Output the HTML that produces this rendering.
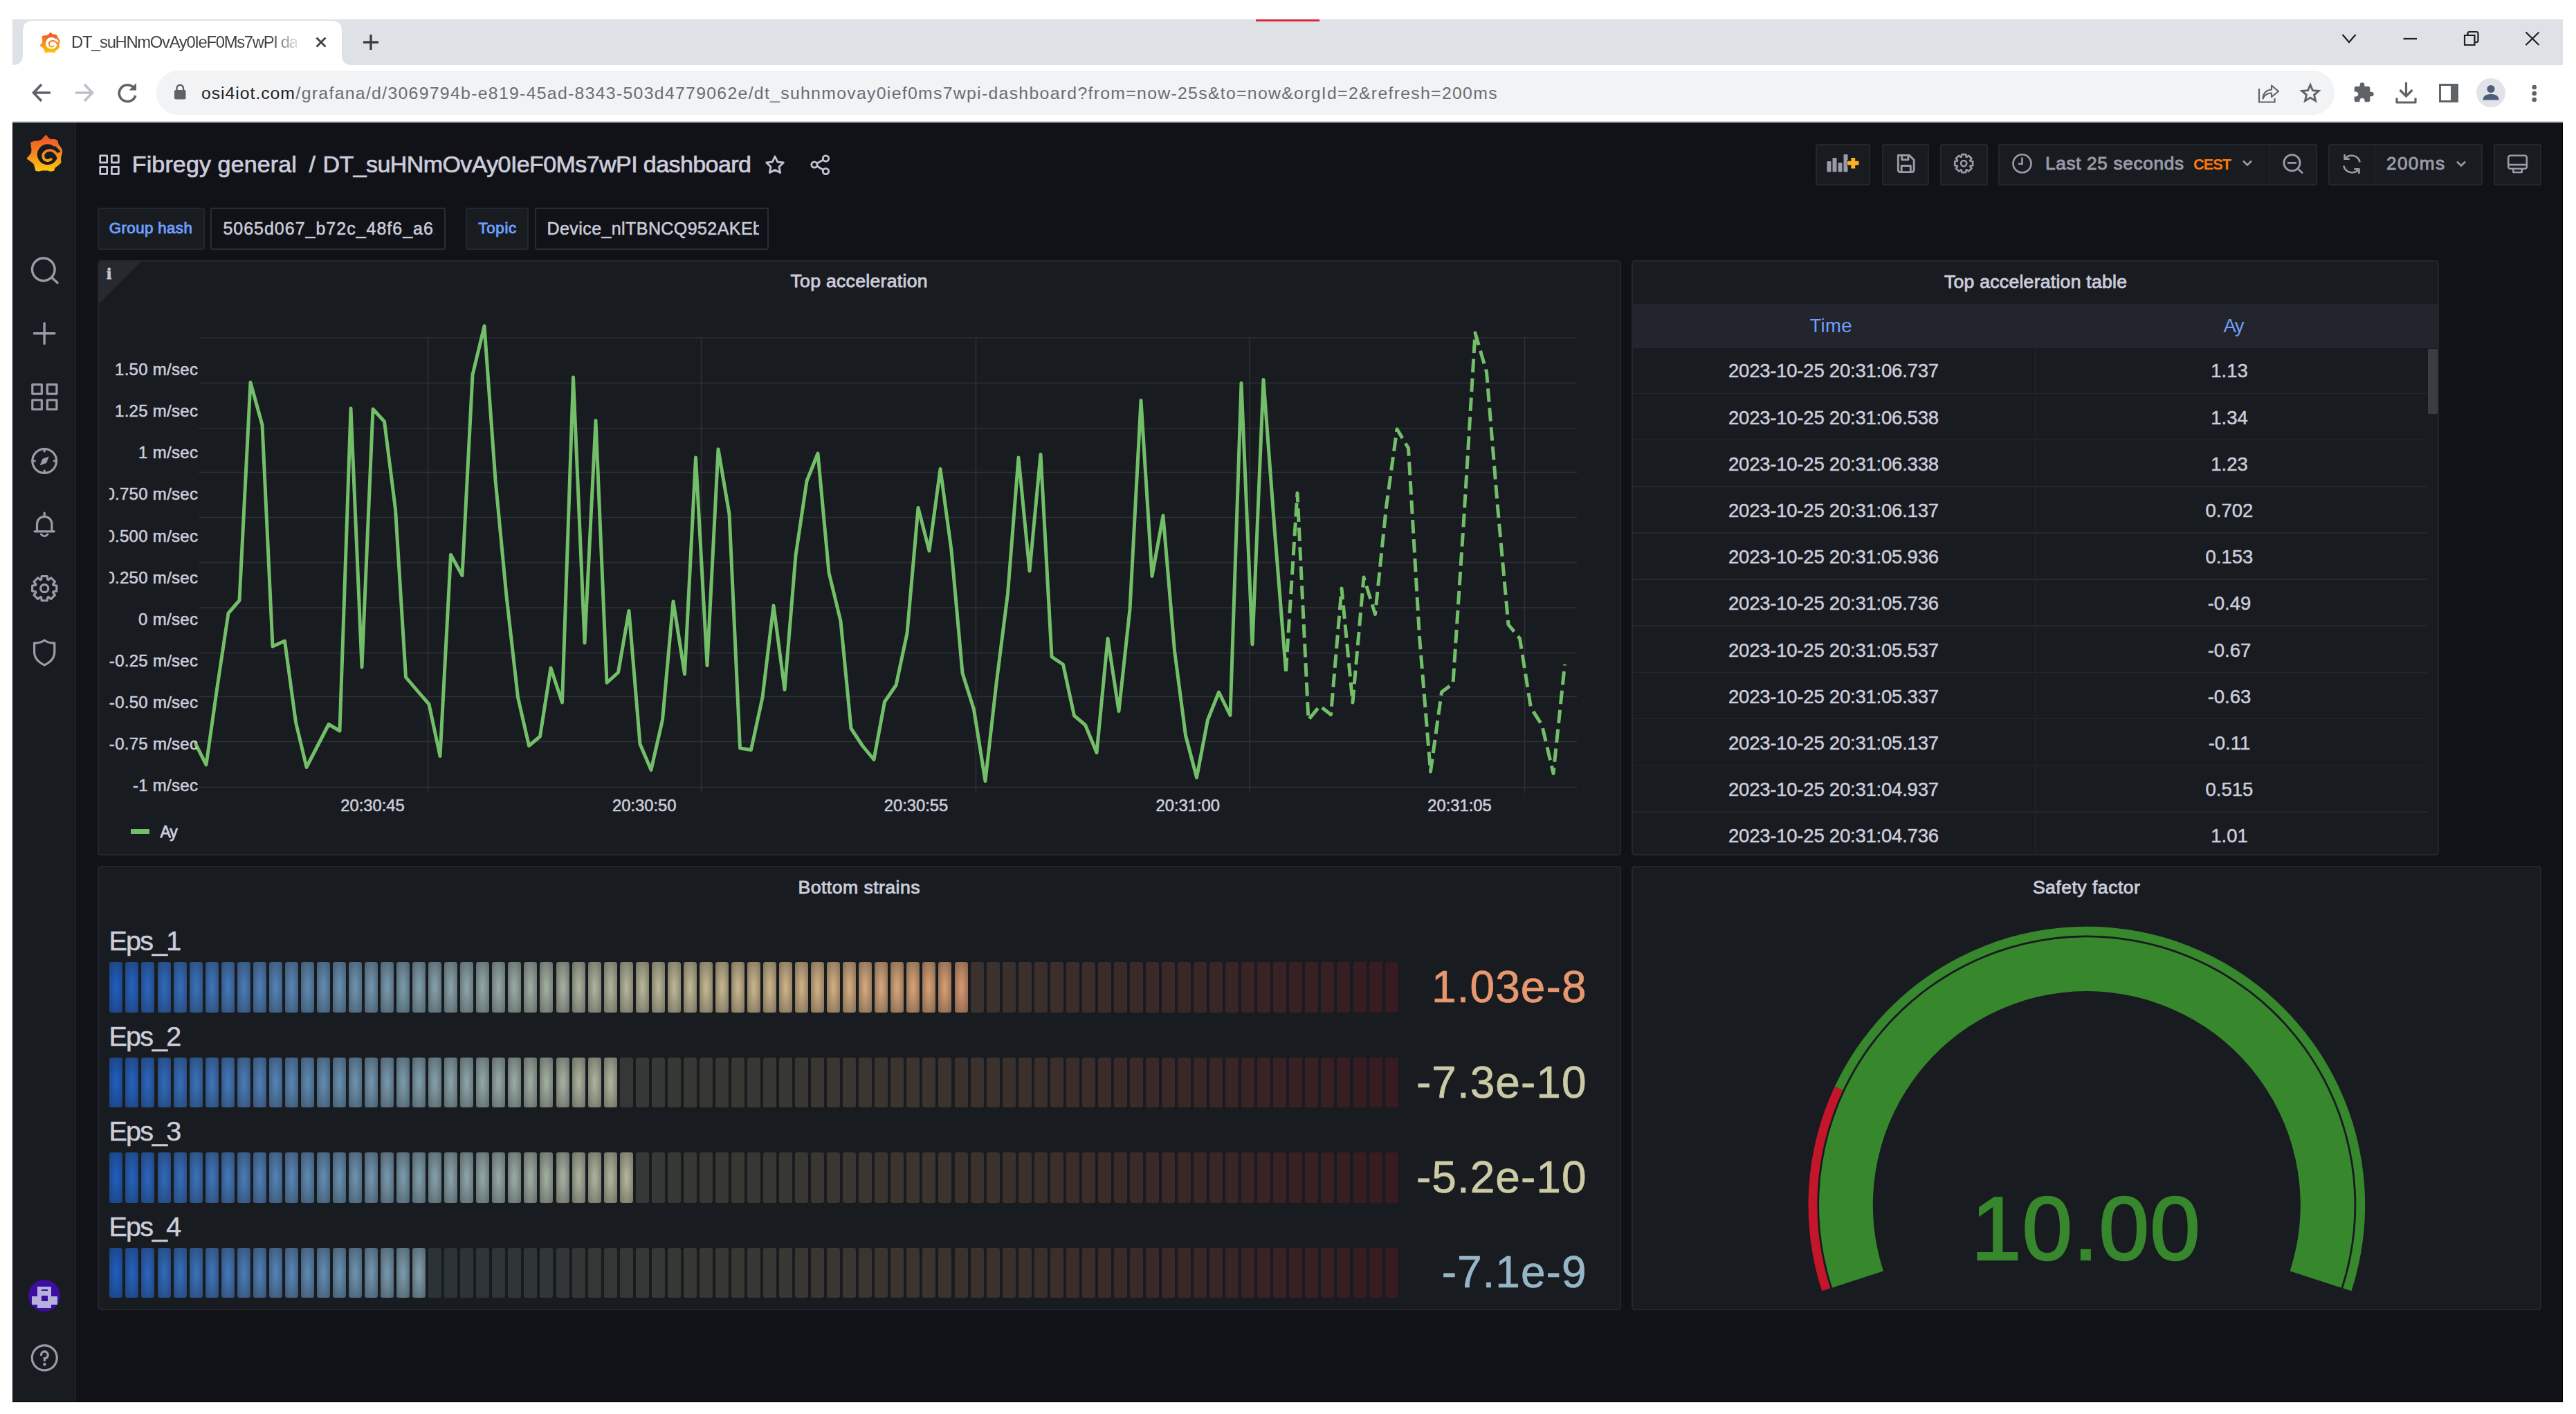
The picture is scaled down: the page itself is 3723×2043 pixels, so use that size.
<!DOCTYPE html>
<html lang="en"><head><meta charset="utf-8"><title>DT_suHNmOvAy0IeF0Ms7wPI dashboard - Grafana</title><style>html,body{margin:0;padding:0}body{width:3723px;height:2043px;position:relative;overflow:hidden;background:#fff;font-family:"Liberation Sans", sans-serif;}.b{position:absolute}.t{position:absolute;white-space:pre;line-height:1}svg{position:absolute;overflow:visible}.lcd i{position:absolute;top:0;width:19px;height:100%;border-radius:3px;display:block}</style></head>
<body>
<div class="b" style="left:18px;top:28px;width:3686px;height:66px;background:#dee1e6;"></div>
<div class="b" style="left:1815px;top:28px;width:92px;height:2.5px;background:#e0283a;"></div>
<svg style="left:0;top:0" width="600" height="100"><path d="M18 94 Q33 94 33 79 L33 45 Q33 30 48 30 L479 30 Q494 30 494 45 L494 79 Q494 94 509 94 Z" fill="#fff"/></svg>
<div class="b" style="left:18px;top:94px;width:3686px;height:82px;background:#fff;"></div>
<svg style="left:49.3px;top:38.8px" width="45.5" height="45.5" viewBox="0 0 80 80"><defs><linearGradient id="lg1" gradientUnits="userSpaceOnUse" x1="0" y1="13" x2="0" y2="66"><stop offset="0.1" stop-color="#f05a28"/><stop offset="0.55" stop-color="#f78d1e"/><stop offset="1" stop-color="#fccb0a"/></linearGradient></defs><path d="M42.43 13.47 L45.26 16.97 L47.24 18.95 L50.92 19.52 L55.16 19.52 L59.12 21.78 L59.97 26.59 L63.08 30.55 L65.06 33.95 L65.74 37.34 L64.21 43.00 L63.37 46.96 L63.93 52.62 L59.97 56.58 L55.16 59.97 L53.47 64.50 L48.66 65.06 L45.26 63.93 L40.74 63.82 L36.21 63.93 L31.68 65.06 L27.72 64.21 L26.87 59.97 L24.89 54.31 L19.80 50.35 L15.16 46.96 L18.67 43.00 L21.78 38.47 L22.07 33.38 L21.22 28.29 L20.93 24.05 L25.46 22.35 L31.68 21.78 L36.78 19.80 L39.60 16.41Z" fill="url(#lg1)" stroke="url(#lg1)" stroke-width="1.2" stroke-linejoin="round"/><circle cx="44.70" cy="41.19" r="14.82" fill="#fff"/><path d="M55.73 28.57 L63.82 37.34 L59.12 39.04 L53.75 33.95Z" fill="#fff"/><path d="M61.67 50.92 C59.97 40.74 54.31 34.96 47.52 35.19 C41.30 35.64 38.02 39.60 38.25 43.56 C38.59 48.09 42.43 50.64 46.11 49.79 C48.09 49.34 49.22 48.77 49.79 48.09" fill="none" stroke="url(#lg1)" stroke-width="3.85" stroke-linecap="round"/></svg>
<span class="t" style="left:103.00px;top:48.67px;font-size:23.8px;color:#3c4043;letter-spacing:-1.304px;padding-bottom:9px;background:linear-gradient(90deg,#3c4043 0,#3c4043 88%,rgba(60,64,67,0.15) 100%);-webkit-background-clip:text;background-clip:text;color:transparent;">DT_suHNmOvAy0IeF0Ms7wPI da</span>
<svg style="left:455px;top:52px" width="18" height="18" viewBox="0 0 18 18"><path d="M2.5 2.5 L15.5 15.5 M15.5 2.5 L2.5 15.5" stroke="#3c4043" stroke-width="2.8" fill="none"/></svg>
<svg style="left:524px;top:49px" width="24" height="24" viewBox="0 0 24 24"><path d="M12 1 V23 M1 12 H23" stroke="#3c4043" stroke-width="3.4" fill="none"/></svg>
<svg style="left:3380px;top:40px" width="300" height="34" viewBox="0 0 300 34" fill="none" stroke="#1f1f1f" stroke-width="2.2"><path d="M5.5 10 L15 21 L24.5 10"/><path d="M93.5 16 H113"/><path d="M182 11 H196.5 V25 H182 Z"/><path d="M186.5 10.5 V8.5 Q186.5 6 189 6 H199 Q201.5 6 201.5 8.5 V18.5 Q201.5 21 199 21 H197"/><path d="M270.5 6.5 L289.5 25 M289.5 6.5 L270.5 25"/></svg>
<svg style="left:40px;top:114px" width="170" height="40" viewBox="0 0 170 40" fill="none" stroke-width="3.6"><path d="M33 20 H9 M20 8 L8.5 20 L20 32" stroke="#5f6368"/><path d="M69 20 H93 M82 8 L93.5 20 L82 32" stroke="#bdc1c6"/><path d="M153 12.5 A12 12 0 1 0 155.8 24" stroke="#5f6368"/><path d="M157 6 V16.5 H146.5 Z" fill="#5f6368" stroke="none"/></svg>
<div class="b" style="left:226px;top:102px;width:3147.5px;height:64px;background:#f1f3f4;border-radius:32px;"></div>
<svg style="left:250px;top:120px" width="22" height="26" viewBox="0 0 22 26"><rect x="2" y="10" width="16.5" height="13.5" rx="2" fill="#5f6368"/><path d="M5.5 11 V7.5 A4.7 4.7 0 0 1 15 7.5 V11" stroke="#5f6368" stroke-width="2.4" fill="none"/></svg>
<span class="t" style="left:291.00px;top:123.22px;font-size:24.8px;color:#202124;letter-spacing:0.958px;">osi4iot.com</span>
<span class="t" style="left:427.50px;top:123.22px;font-size:24.8px;color:#696d72;letter-spacing:1.303px;">/grafana/d/3069794b-e819-45ad-8343-503d4779062e/dt_suhnmovay0ief0ms7wpi-dashboard?from=now-25s&amp;to=now&amp;orgId=2&amp;refresh=200ms</span>
<svg style="left:3262px;top:118px" width="36" height="34" viewBox="0 0 36 34" fill="none" stroke="#5f6368" stroke-width="2.2"><path d="M3 10 V29.5 H25.5 V24"/><path d="M8.5 24.5 C9 16 14 12 21 11.5 V5.5 L31 14 L21 22 V16.5 C15 16.5 11 19 8.5 24.5Z" stroke-linejoin="round"/></svg>
<svg style="left:3323px;top:118px" width="32" height="32" viewBox="0 0 32 32" fill="none" stroke="#5f6368" stroke-width="2.8" stroke-linejoin="miter"><path d="M16 4.5 L19.4 12.6 L28.2 13.3 L21.5 19.1 L23.6 27.7 L16 23.1 L8.4 27.7 L10.5 19.1 L3.8 13.3 L12.6 12.6 Z"/></svg>
<svg style="left:3400px;top:118px" width="32" height="32" viewBox="0 0 24 24"><path fill="#5f6368" d="M20.5 11H19V7c0-1.1-.9-2-2-2h-4V3.5a2.5 2.5 0 0 0-5 0V5H4c-1.1 0-1.99.9-1.99 2v3.8H3.5c1.49 0 2.7 1.21 2.7 2.7s-1.21 2.7-2.7 2.7H2V20c0 1.1.9 2 2 2h3.8v-1.5c0-1.49 1.21-2.7 2.7-2.7 1.49 0 2.7 1.21 2.7 2.7V22H17c1.1 0 2-.9 2-2v-4h1.5a2.5 2.5 0 0 0 0-5z"/></svg>
<svg style="left:3460px;top:116px" width="36" height="36" viewBox="0 0 36 36" fill="none" stroke="#5f6368" stroke-width="3.2"><path d="M17.5 3 V22.5 M8.5 14 L17.5 23 L26.5 14"/><path d="M4 25.5 V32 H31 V25.5" stroke-linejoin="round"/></svg>
<svg style="left:3524px;top:120px" width="30" height="30" viewBox="0 0 30 30"><rect x="2.5" y="2.5" width="25" height="24" fill="none" stroke="#5f6368" stroke-width="3"/><rect x="18" y="2.5" width="9.5" height="24" fill="#5f6368"/></svg>
<div class="b" style="left:3579px;top:112.75px;width:42px;height:42px;background:#e1e3e8;border-radius:21px;"></div>
<svg style="left:3579px;top:112.75px" width="42" height="42" viewBox="0 0 42 42"><circle cx="21" cy="15.5" r="5.6" fill="#4e5d78"/><path d="M9.5 31.5 C9.5 25 15 23 21 23 C27 23 32.5 25 32.5 31.5 Z" fill="#4e5d78"/></svg>
<svg style="left:3656px;top:118px" width="14" height="34" viewBox="0 0 14 34"><circle cx="6.75" cy="8" r="3.3" fill="#5f6368"/><circle cx="6.75" cy="17" r="3.3" fill="#5f6368"/><circle cx="6.75" cy="26" r="3.3" fill="#5f6368"/></svg>
<div class="b" style="left:18px;top:175px;width:3686px;height:1.5px;background:#d4d6d9;"></div>
<div class="b" style="left:18px;top:176.5px;width:3686px;height:1849.5px;background:#111217;"></div>
<div class="b" style="left:18px;top:2025px;width:3686px;height:1px;background:#000;"></div>
<div class="b" style="left:3703.3px;top:176.5px;width:1px;height:1849.5px;background:#000;"></div>
<div class="b" style="left:18px;top:176.5px;width:90.6px;height:1848.5px;background:#181b1f;border-right:1.5px solid #25272d;"></div>
<svg style="left:24px;top:182px" width="80" height="80" viewBox="0 0 80 80"><defs><linearGradient id="lg2" gradientUnits="userSpaceOnUse" x1="0" y1="13" x2="0" y2="66"><stop offset="0.1" stop-color="#f05a28"/><stop offset="0.55" stop-color="#f78d1e"/><stop offset="1" stop-color="#fccb0a"/></linearGradient></defs><path d="M42.43 13.47 L45.26 16.97 L47.24 18.95 L50.92 19.52 L55.16 19.52 L59.12 21.78 L59.97 26.59 L63.08 30.55 L65.06 33.95 L65.74 37.34 L64.21 43.00 L63.37 46.96 L63.93 52.62 L59.97 56.58 L55.16 59.97 L53.47 64.50 L48.66 65.06 L45.26 63.93 L40.74 63.82 L36.21 63.93 L31.68 65.06 L27.72 64.21 L26.87 59.97 L24.89 54.31 L19.80 50.35 L15.16 46.96 L18.67 43.00 L21.78 38.47 L22.07 33.38 L21.22 28.29 L20.93 24.05 L25.46 22.35 L31.68 21.78 L36.78 19.80 L39.60 16.41Z" fill="url(#lg2)" stroke="url(#lg2)" stroke-width="1.2" stroke-linejoin="round"/><circle cx="44.70" cy="41.19" r="14.82" fill="#181b1f"/><path d="M55.73 28.57 L63.82 37.34 L59.12 39.04 L53.75 33.95Z" fill="#181b1f"/><path d="M61.67 50.92 C59.97 40.74 54.31 34.96 47.52 35.19 C41.30 35.64 38.02 39.60 38.25 43.56 C38.59 48.09 42.43 50.64 46.11 49.79 C48.09 49.34 49.22 48.77 49.79 48.09" fill="none" stroke="url(#lg2)" stroke-width="3.85" stroke-linecap="round"/></svg>
<svg style="left:40px;top:366px" width="50" height="50" viewBox="0 0 50 50" fill="none" stroke="#9a9ba8" stroke-width="3.4" stroke-linecap="round"><circle cx="22.8" cy="23.3" r="16.3"/><path d="M34.8 35 L43 42.5"/></svg>
<svg style="left:40px;top:458px" width="50" height="50" viewBox="0 0 50 50" fill="none" stroke="#9a9ba8" stroke-width="3.4" stroke-linecap="round"><path d="M24.1 9 V38.5 M9.3 23.7 H38.9"/></svg>
<svg style="left:40px;top:550px" width="50" height="50" viewBox="0 0 50 50" fill="none" stroke="#9a9ba8" stroke-width="3.2" stroke-linejoin="round"><rect x="6.8" y="5.6" width="13.5" height="13.5"/><rect x="28.4" y="5.6" width="13.5" height="13.5"/><rect x="6.8" y="28" width="13.5" height="13.5"/><rect x="28.4" y="28" width="13.5" height="13.5"/></svg>
<svg style="left:40px;top:642px" width="50" height="50" viewBox="0 0 50 50" fill="none" stroke="#9a9ba8" stroke-width="3.2" stroke-linecap="round"><circle cx="24.2" cy="24" r="17.4"/><path d="M24.2 6.6 V10 M24.2 38 V41.4 M6.8 24 H10.2 M38.2 24 H41.6"/><path d="M30.8 17.4 L27 27 L17.6 30.6 L21.4 21 Z" fill="#9a9ba8" stroke="none"/></svg>
<svg style="left:40px;top:734px" width="50" height="50" viewBox="0 0 50 50" fill="none" stroke="#9a9ba8" stroke-width="3.2" stroke-linecap="round" stroke-linejoin="round"><path d="M24.2 7 V10"/><path d="M13.5 33.5 V23 A10.7 10.7 0 0 1 34.9 23 V33.5 M10 33.8 H38.4"/><path d="M19.5 38 Q24.2 43.5 28.9 38"/></svg>
<svg style="left:41px;top:827px" width="48" height="48" viewBox="0 0 50 50" fill="none" stroke="#9a9ba8" stroke-width="3.3" stroke-linejoin="round"><path d="M19.39 10.74 L20.01 5.77 L28.39 5.77 L29.01 10.74 L30.25 11.25 L34.20 8.18 L40.12 14.10 L37.05 18.05 L37.56 19.29 L42.53 19.91 L42.53 28.29 L37.56 28.91 L37.05 30.15 L40.12 34.10 L34.20 40.02 L30.25 36.95 L29.01 37.46 L28.39 42.43 L20.01 42.43 L19.39 37.46 L18.15 36.95 L14.20 40.02 L8.28 34.10 L11.35 30.15 L10.84 28.91 L5.87 28.29 L5.87 19.91 L10.84 19.29 L11.35 18.05 L8.28 14.10 L14.20 8.18 L18.15 11.25Z"/><circle cx="24.2" cy="24.1" r="5.8"/></svg>
<svg style="left:40px;top:918px" width="50" height="50" viewBox="0 0 50 50" fill="none" stroke="#9a9ba8" stroke-width="3.2" stroke-linejoin="round"><path d="M24.2 7 C19 10.5 14 11.5 9.6 11 V24 C9.6 33 16 39 24.2 43 C32.4 39 38.8 33 38.8 24 V11 C34.4 11.5 29.4 10.5 24.2 7 Z"/></svg>
<div class="b" style="left:41.3px;top:1849px;width:46px;height:46px;background:#3b0ea0;border-radius:23px;"></div>
<div class="b" style="left:54.377134372680025px;top:1858.9012620638455px;width:19.747587230883443px;height:15.293244246473645px;background:#b6b0dc;"></div>
<div class="b" style="left:46.210838901262065px;top:1873.4521158129176px;width:36.822568671121005px;height:11.878247958426131px;background:#b6b0dc;"></div>
<div class="b" style="left:54.377134372680025px;top:1885.033407572383px;width:19.747587230883443px;height:4.7512991833704525px;background:#b6b0dc;"></div>
<div class="b" style="left:60.31625835189309px;top:1863.0586488492947px;width:8.908685968819599px;height:2.3756495916852263px;background:#3b0ea0;"></div>
<div class="b" style="left:60.31625835189309px;top:1871.9673348181143px;width:8.908685968819599px;height:8.314773570898293px;background:#3b0ea0;"></div>
<svg style="left:40px;top:1937px" width="50" height="50" viewBox="0 0 50 50" fill="none" stroke="#9a9ba8" stroke-width="3.2" stroke-linecap="round"><circle cx="24.3" cy="24.8" r="18"/><path d="M19.5 20.5 A4.9 4.9 0 1 1 24.4 25.6 V28.5" stroke-width="3.4"/><circle cx="24.4" cy="34.2" r="2.2" fill="#9a9ba8" stroke="none"/></svg>
<svg style="left:140px;top:220px" width="36" height="36" viewBox="0 0 36 36" fill="none" stroke="#ccccdc" stroke-width="2.6" stroke-linejoin="round"><rect x="4.7" y="4.9" width="10" height="10"/><rect x="21.4" y="4.9" width="10" height="10"/><rect x="4.7" y="21.4" width="10" height="10"/><rect x="21.4" y="21.4" width="10" height="10"/></svg>
<span class="t" style="left:190.80px;top:220.30px;font-size:34px;color:#ccccdc;letter-spacing:0.125px;-webkit-text-stroke:0.7px #ccccdc;">Fibregy general</span>
<span class="t" style="left:446.50px;top:220.30px;font-size:34px;color:#ccccdc;-webkit-text-stroke:0.7px #ccccdc;">/</span>
<span class="t" style="left:466.50px;top:220.30px;font-size:34px;color:#ccccdc;letter-spacing:-0.584px;-webkit-text-stroke:0.7px #ccccdc;">DT_suHNmOvAy0IeF0Ms7wPI dashboard</span>
<svg style="left:1104px;top:222px" width="32" height="32" viewBox="0 0 32 32" fill="none" stroke="#c4c5d2" stroke-width="2.8" stroke-linejoin="round"><path d="M16 4 L19.7 11.9 L28.3 13 L22 19 L23.6 27.6 L16 23.4 L8.4 27.6 L10 19 L3.7 13 L12.3 11.9 Z"/></svg>
<svg style="left:1169px;top:221px" width="34" height="34" viewBox="0 0 34 34" fill="none" stroke="#c4c5d2" stroke-width="2.8"><circle cx="24.5" cy="8" r="4.2"/><circle cx="8" cy="17" r="4.2"/><circle cx="24.5" cy="26.5" r="4.2"/><path d="M11.7 15 L20.8 10 M11.7 19 L20.8 24.5"/></svg>
<div class="b" style="left:2623.75px;top:207.6px;width:79.5px;height:60.4px;background:#181b1f;border:2px solid #23262c;box-sizing:border-box;border-radius:3px;"></div>
<div class="b" style="left:2719.5px;top:207.6px;width:68.5px;height:60.4px;background:#181b1f;border:2px solid #23262c;box-sizing:border-box;border-radius:3px;"></div>
<div class="b" style="left:2804.25px;top:207.6px;width:68.25px;height:60.4px;background:#181b1f;border:2px solid #23262c;box-sizing:border-box;border-radius:3px;"></div>
<div class="b" style="left:2888.25px;top:207.6px;width:460.25px;height:60.4px;background:#181b1f;border:2px solid #23262c;box-sizing:border-box;border-radius:3px;"></div>
<div class="b" style="left:3279.5px;top:208px;width:1.5px;height:59.5px;background:#25272d;"></div>
<div class="b" style="left:3364.6px;top:207.6px;width:223.4000000000001px;height:60.4px;background:#181b1f;border:2px solid #23262c;box-sizing:border-box;border-radius:3px;"></div>
<div class="b" style="left:3431.5px;top:208px;width:1.5px;height:59.5px;background:#25272d;"></div>
<div class="b" style="left:3604px;top:207.6px;width:69px;height:60.4px;background:#181b1f;border:2px solid #23262c;box-sizing:border-box;border-radius:3px;"></div>
<svg style="left:2638px;top:214px" width="56" height="44" viewBox="0 0 56 44"><rect x="2.5" y="19" width="6" height="15.5" rx="1" fill="#9a9ba8"/><rect x="10.5" y="14" width="6" height="20.5" rx="1" fill="#9a9ba8"/><rect x="18.5" y="21" width="6" height="13.5" rx="1" fill="#9a9ba8"/><rect x="26.5" y="9" width="6" height="25.5" rx="1" fill="#9a9ba8"/><path d="M40.3 13 V30 M31.5 21.7 H49" stroke="#181b1f" stroke-width="9.5"/><path d="M40.3 14 V29.5 M32 21.7 H48.5" stroke="#ffb023" stroke-width="5.8"/></svg>
<svg style="left:2736.5px;top:219px" width="35" height="35" viewBox="0 0 36 36" fill="none" stroke="#9a9ba8" stroke-width="3" stroke-linejoin="round"><path d="M6.5 5.5 H23 L30 12.5 V27 Q30 30.5 26.5 30.5 H10 Q6.5 30.5 6.5 27 Z"/><path d="M12 5.5 V12 H21.5 V5.5"/><path d="M11.5 30 V21 H25 V30"/></svg>
<svg style="left:2820.8px;top:218.8px" width="35.5" height="35.5" viewBox="0 0 50 50" fill="none" stroke="#9a9ba8" stroke-width="3.7" stroke-linejoin="round"><path d="M19.39 10.74 L20.01 5.77 L28.39 5.77 L29.01 10.74 L30.25 11.25 L34.20 8.18 L40.12 14.10 L37.05 18.05 L37.56 19.29 L42.53 19.91 L42.53 28.29 L37.56 28.91 L37.05 30.15 L40.12 34.10 L34.20 40.02 L30.25 36.95 L29.01 37.46 L28.39 42.43 L20.01 42.43 L19.39 37.46 L18.15 36.95 L14.20 40.02 L8.28 34.10 L11.35 30.15 L10.84 28.91 L5.87 28.29 L5.87 19.91 L10.84 19.29 L11.35 18.05 L8.28 14.10 L14.20 8.18 L18.15 11.25Z"/><circle cx="24.2" cy="24.1" r="5.8"/></svg>
<svg style="left:2906px;top:220px" width="34" height="34" viewBox="0 0 34 34" fill="none" stroke="#9a9ba8" stroke-width="2.6" stroke-linecap="round"><circle cx="16.5" cy="16.3" r="13"/><path d="M16.5 8.5 V16.8 H12"/></svg>
<span class="t" style="left:2956.00px;top:222.93px;font-size:26.2px;color:#9a9ba8;letter-spacing:0.663px;-webkit-text-stroke:0.9px #9a9ba8;">Last 25 seconds</span>
<span class="t" style="left:3170.00px;top:227.07px;font-size:21.8px;color:#ff780a;letter-spacing:-1.047px;font-weight:700;">CEST</span>
<svg style="left:3238px;top:228px" width="20" height="16" viewBox="0 0 20 16" fill="none" stroke="#9a9ba8" stroke-width="2.6"><path d="M4 4.5 L10 10.5 L16 4.5"/></svg>
<svg style="left:3296.3px;top:218.6px" width="38" height="38" viewBox="0 0 38 38" fill="none" stroke="#9a9ba8" stroke-width="2.8" stroke-linecap="round"><circle cx="16.5" cy="16.3" r="11.6"/><path d="M25 24.8 L31.2 30.6 M11 16.3 H22"/></svg>
<svg style="left:3381px;top:219.5px" width="36" height="34" preserveAspectRatio="none" viewBox="0 0 38 38" fill="none" stroke="#9a9ba8" stroke-width="2.8" stroke-linecap="round" stroke-linejoin="round"><path d="M31 15 A12.6 12.6 0 0 0 8.5 10.5 M8 4.5 V11 H14.5"/><path d="M7 23 A12.6 12.6 0 0 0 29.5 27.5 M30 33.5 V27 H23.5"/></svg>
<span class="t" style="left:3449.00px;top:222.93px;font-size:26.2px;color:#9a9ba8;letter-spacing:1.348px;-webkit-text-stroke:0.9px #9a9ba8;">200ms</span>
<svg style="left:3546.5px;top:228.5px" width="20" height="16" viewBox="0 0 20 16" fill="none" stroke="#9a9ba8" stroke-width="2.6"><path d="M4 4.5 L10 10.5 L16 4.5"/></svg>
<svg style="left:3620px;top:219.5px" width="38" height="38" viewBox="0 0 40 40" fill="none" stroke="#9a9ba8" stroke-width="2.8" stroke-linejoin="round"><rect x="5.5" y="5" width="28" height="20" rx="3"/><path d="M5.5 19 H33.5"/><path d="M13 25 V30.5 H26 V25"/></svg>
<div class="b" style="left:141.3px;top:299.7px;width:154.8px;height:61px;background:#181b1f;border:2px solid #23262c;box-sizing:border-box;border-radius:3px;"></div>
<span class="t" style="left:157.80px;top:319.05px;font-size:22.3px;color:#6e9fff;letter-spacing:0.387px;-webkit-text-stroke:0.9px #6e9fff;">Group hash</span>
<div class="b" style="left:304px;top:299.7px;width:339.75px;height:61px;background:#111217;border:2px solid #292c33;box-sizing:border-box;border-radius:3px;"></div>
<div class="b" style="left:322.4px;top:317.55px;width:306.1px;height:32.5px;overflow:hidden"><span class="t" style="left:0.00px;top:0;font-size:25px;color:#ccccdc;letter-spacing:0.992px;-webkit-text-stroke:0.5px #ccccdc;">5065d067_b72c_48f6_a62</span></div>
<div class="b" style="left:673px;top:299.7px;width:91.25px;height:61px;background:#181b1f;border:2px solid #23262c;box-sizing:border-box;border-radius:3px;"></div>
<span class="t" style="left:691.25px;top:319.05px;font-size:22.3px;color:#6e9fff;letter-spacing:0.734px;-webkit-text-stroke:0.9px #6e9fff;">Topic</span>
<div class="b" style="left:773px;top:299.7px;width:338.25px;height:61px;background:#111217;border:2px solid #292c33;box-sizing:border-box;border-radius:3px;"></div>
<div class="b" style="left:790.5px;top:317.55px;width:306.0px;height:32.5px;overflow:hidden"><span class="t" style="left:0.00px;top:0;font-size:25px;color:#ccccdc;letter-spacing:0.424px;-webkit-text-stroke:0.5px #ccccdc;">Device_nlTBNCQ952AKEb</span></div>
<div class="b" style="left:141.0px;top:376.2px;width:2202.4px;height:860.2px;background:#181b1f;border:2px solid #23262c;box-sizing:border-box;border-radius:4.5px;"></div>
<svg style="left:142.8px;top:378px" width="62" height="62"><path d="M0 4 Q0 0 4 0 L61 0 L0 61 Z" fill="#262930"/></svg>
<span class="t" style="left:154.20px;top:382.60px;font-size:24px;color:#c6c7d2;font-weight:700;-webkit-text-stroke:1.0px #c6c7d2;font-family:Liberation Serif,serif;">i</span>
<span class="t" style="left:1142.50px;top:393.09px;font-size:26.6px;color:#ccccdc;letter-spacing:0.289px;-webkit-text-stroke:0.85px #ccccdc;">Top acceleration</span>
<svg style="left:0;top:0" width="3723" height="1240"><g stroke="#2d3035" stroke-width="1.5"><path d="M287.5 488 H2279"/><path d="M287.5 553.5 H2279"/><path d="M287.5 619 H2279"/><path d="M287.5 682.5 H2279"/><path d="M287.5 747.5 H2279"/><path d="M287.5 812.5 H2279"/><path d="M287.5 878 H2279"/><path d="M287.5 943.5 H2279"/><path d="M287.5 1006.5 H2279"/><path d="M287.5 1071.5 H2279"/><path d="M287.5 1137.5 H2279"/><path d="M618.5 488 V1146"/><path d="M1013.5 488 V1146"/><path d="M1410.5 488 V1146"/><path d="M1806 488 V1146"/><path d="M2203.5 488 V1146"/></g><defs><clipPath id="pc"><rect x="280.5" y="460" width="1999" height="690"/></clipPath></defs><g clip-path="url(#pc)" fill="none" stroke="#73bf69" stroke-width="5" stroke-linejoin="round" stroke-linecap="butt"><polyline points="281.0,1071.5 298.0,1105.0 314.0,992.5 330.0,886.0 346.0,867.5 362.0,552.5 379.0,614.0 394.0,934.0 411.5,926.0 427.5,1043.5 443.0,1108.5 459.0,1077.5 475.0,1046.5 491.0,1056.0 507.0,590.0 523.0,964.0 539.0,591.0 555.5,609.0 571.5,736.0 586.5,978.5 604.0,999.0 620.0,1017.5 636.0,1092.5 651.5,801.5 668.0,831.5 683.0,541.5 700.0,471.0 716.0,693.5 732.0,861.5 748.5,1007.5 764.5,1077.5 780.5,1064.0 796.0,965.0 812.5,1015.0 828.5,545.0 845.0,929.0 861.0,607.5 877.0,986.5 893.5,971.5 909.0,882.5 925.0,1075.0 941.0,1112.5 957.5,1040.0 973.0,869.0 989.5,974.0 1005.5,661.0 1022.0,961.5 1038.0,649.0 1054.0,742.5 1069.5,1081.0 1085.5,1083.5 1102.0,1007.5 1118.0,875.0 1134.0,996.5 1150.0,802.5 1166.0,695.0 1182.0,655.0 1198.0,827.5 1215.0,897.5 1230.0,1052.5 1246.5,1077.5 1263.0,1097.5 1278.5,1014.0 1295.0,990.0 1311.0,915.0 1327.0,733.5 1343.0,796.0 1359.0,677.5 1375.0,795.0 1391.0,972.5 1407.5,1025.0 1424.0,1128.5 1440.0,987.5 1456.5,857.5 1472.0,661.0 1488.0,825.0 1504.0,656.5 1520.0,949.0 1536.5,960.0 1552.5,1034.0 1568.5,1047.5 1585.0,1087.5 1601.0,922.5 1617.0,1027.5 1633.0,880.0 1649.0,578.5 1665.0,832.5 1681.0,745.0 1697.5,940.0 1713.5,1062.5 1729.5,1123.5 1745.5,1040.0 1761.5,1000.0 1778.0,1033.5 1794.0,553.5 1810.0,931.0 1826.0,548.5 1842.5,770.0 1858.5,970.0"/><polyline points="1858.5,970.0 1875.0,712.5 1891.0,1040.0 1907.5,1020.0 1923.5,1032.5 1939.0,850.0 1955.0,1015.0 1971.0,834.0 1987.5,887.5 2003.5,732.5 2019.0,620.0 2035.5,647.5 2051.5,920.0 2067.5,1115.0 2083.5,1000.0 2100.0,987.5 2116.0,745.0 2132.0,481.0 2148.5,537.5 2164.5,732.5 2180.0,902.5 2196.5,922.5 2212.5,1022.5 2228.5,1047.5 2245.0,1117.5 2261.5,960.0" stroke-dasharray="19.5 8.5"/></g></svg>
<div class="b" style="left:158px;top:521.90px;width:128px;height:31.2px;overflow:hidden"><span class="t" style="left:8.03px;top:0;font-size:24px;color:#ccccdc;letter-spacing:0.287px;-webkit-text-stroke:0.55px #ccccdc;">1.50 m/sec</span></div>
<div class="b" style="left:158px;top:582.05px;width:128px;height:31.2px;overflow:hidden"><span class="t" style="left:8.03px;top:0;font-size:24px;color:#ccccdc;letter-spacing:0.287px;-webkit-text-stroke:0.55px #ccccdc;">1.25 m/sec</span></div>
<div class="b" style="left:158px;top:642.20px;width:128px;height:31.2px;overflow:hidden"><span class="t" style="left:42.12px;top:0;font-size:24px;color:#ccccdc;letter-spacing:0.308px;-webkit-text-stroke:0.55px #ccccdc;">1 m/sec</span></div>
<div class="b" style="left:158px;top:702.35px;width:128px;height:31.2px;overflow:hidden"><span class="t" style="left:-5.61px;top:0;font-size:24px;color:#ccccdc;letter-spacing:0.288px;-webkit-text-stroke:0.55px #ccccdc;">0.750 m/sec</span></div>
<div class="b" style="left:158px;top:762.50px;width:128px;height:31.2px;overflow:hidden"><span class="t" style="left:-5.61px;top:0;font-size:24px;color:#ccccdc;letter-spacing:0.288px;-webkit-text-stroke:0.55px #ccccdc;">0.500 m/sec</span></div>
<div class="b" style="left:158px;top:822.65px;width:128px;height:31.2px;overflow:hidden"><span class="t" style="left:-5.61px;top:0;font-size:24px;color:#ccccdc;letter-spacing:0.288px;-webkit-text-stroke:0.55px #ccccdc;">0.250 m/sec</span></div>
<div class="b" style="left:158px;top:882.80px;width:128px;height:31.2px;overflow:hidden"><span class="t" style="left:42.12px;top:0;font-size:24px;color:#ccccdc;letter-spacing:0.308px;-webkit-text-stroke:0.55px #ccccdc;">0 m/sec</span></div>
<div class="b" style="left:158px;top:942.95px;width:128px;height:31.2px;overflow:hidden"><span class="t" style="left:-0.15px;top:0;font-size:24px;color:#ccccdc;letter-spacing:0.276px;-webkit-text-stroke:0.55px #ccccdc;">-0.25 m/sec</span></div>
<div class="b" style="left:158px;top:1003.10px;width:128px;height:31.2px;overflow:hidden"><span class="t" style="left:-0.15px;top:0;font-size:24px;color:#ccccdc;letter-spacing:0.276px;-webkit-text-stroke:0.55px #ccccdc;">-0.50 m/sec</span></div>
<div class="b" style="left:158px;top:1063.25px;width:128px;height:31.2px;overflow:hidden"><span class="t" style="left:-0.15px;top:0;font-size:24px;color:#ccccdc;letter-spacing:0.276px;-webkit-text-stroke:0.55px #ccccdc;">-0.75 m/sec</span></div>
<div class="b" style="left:158px;top:1123.40px;width:128px;height:31.2px;overflow:hidden"><span class="t" style="left:33.96px;top:0;font-size:24px;color:#ccccdc;letter-spacing:0.289px;-webkit-text-stroke:0.55px #ccccdc;">-1 m/sec</span></div>
<span class="t" style="left:492.18px;top:1152.37px;font-size:23.8px;color:#ccccdc;-webkit-text-stroke:0.55px #ccccdc;">20:30:45</span>
<span class="t" style="left:884.93px;top:1152.37px;font-size:23.8px;color:#ccccdc;-webkit-text-stroke:0.55px #ccccdc;">20:30:50</span>
<span class="t" style="left:1277.68px;top:1152.37px;font-size:23.8px;color:#ccccdc;-webkit-text-stroke:0.55px #ccccdc;">20:30:55</span>
<span class="t" style="left:1670.43px;top:1152.37px;font-size:23.8px;color:#ccccdc;-webkit-text-stroke:0.55px #ccccdc;">20:31:00</span>
<span class="t" style="left:2063.18px;top:1152.37px;font-size:23.8px;color:#ccccdc;-webkit-text-stroke:0.55px #ccccdc;">20:31:05</span>
<div class="b" style="left:189px;top:1197.8px;width:27px;height:7.5px;background:#73bf69;border-radius:0.5px;"></div>
<span class="t" style="left:231.50px;top:1191.15px;font-size:23px;color:#ccccdc;letter-spacing:-1.058px;-webkit-text-stroke:0.8px #ccccdc;">Ay</span>
<div class="b" style="left:2357.8px;top:376.2px;width:1167.5px;height:860.2px;background:#181b1f;border:2px solid #23262c;box-sizing:border-box;border-radius:4.5px;"></div>
<span class="t" style="left:2810.00px;top:393.59px;font-size:26.6px;color:#ccccdc;letter-spacing:0.251px;-webkit-text-stroke:0.85px #ccccdc;">Top acceleration table</span>
<div class="b" style="left:2359.8px;top:439px;width:1163.5px;height:63.5px;background:#22252b;"></div>
<span class="t" style="left:2615.50px;top:456.62px;font-size:27.5px;color:#6e9fff;letter-spacing:0.302px;">Time</span>
<span class="t" style="left:3213.50px;top:456.62px;font-size:27.5px;color:#6e9fff;letter-spacing:-1.609px;">Ay</span>
<div class="b" style="left:2940.7px;top:439px;width:1.5px;height:795.4000000000001px;background:#25272d;"></div>
<div class="b" style="left:2359.8px;top:567.7px;width:1148.1999999999998px;height:1.5px;background:#25272d;"></div>
<span class="t" style="left:2498.00px;top:522.42px;font-size:27.5px;color:#ccccdc;letter-spacing:-0.222px;-webkit-text-stroke:0.5px #ccccdc;">2023-10-25 20:31:06.737</span>
<span class="t" style="left:3195.23px;top:522.42px;font-size:27.5px;color:#ccccdc;-webkit-text-stroke:0.5px #ccccdc;">1.13</span>
<div class="b" style="left:2359.8px;top:634.85px;width:1148.1999999999998px;height:1.5px;background:#25272d;"></div>
<span class="t" style="left:2498.00px;top:589.62px;font-size:27.5px;color:#ccccdc;letter-spacing:-0.222px;-webkit-text-stroke:0.5px #ccccdc;">2023-10-25 20:31:06.538</span>
<span class="t" style="left:3195.23px;top:589.62px;font-size:27.5px;color:#ccccdc;-webkit-text-stroke:0.5px #ccccdc;">1.34</span>
<div class="b" style="left:2359.8px;top:702.0px;width:1148.1999999999998px;height:1.5px;background:#25272d;"></div>
<span class="t" style="left:2498.00px;top:656.82px;font-size:27.5px;color:#ccccdc;letter-spacing:-0.222px;-webkit-text-stroke:0.5px #ccccdc;">2023-10-25 20:31:06.338</span>
<span class="t" style="left:3195.23px;top:656.82px;font-size:27.5px;color:#ccccdc;-webkit-text-stroke:0.5px #ccccdc;">1.23</span>
<div class="b" style="left:2359.8px;top:769.1500000000001px;width:1148.1999999999998px;height:1.5px;background:#25272d;"></div>
<span class="t" style="left:2498.00px;top:724.02px;font-size:27.5px;color:#ccccdc;letter-spacing:-0.222px;-webkit-text-stroke:0.5px #ccccdc;">2023-10-25 20:31:06.137</span>
<span class="t" style="left:3187.59px;top:724.02px;font-size:27.5px;color:#ccccdc;-webkit-text-stroke:0.5px #ccccdc;">0.702</span>
<div class="b" style="left:2359.8px;top:836.3000000000001px;width:1148.1999999999998px;height:1.5px;background:#25272d;"></div>
<span class="t" style="left:2498.00px;top:791.22px;font-size:27.5px;color:#ccccdc;letter-spacing:-0.222px;-webkit-text-stroke:0.5px #ccccdc;">2023-10-25 20:31:05.936</span>
<span class="t" style="left:3187.59px;top:791.22px;font-size:27.5px;color:#ccccdc;-webkit-text-stroke:0.5px #ccccdc;">0.153</span>
<div class="b" style="left:2359.8px;top:903.45px;width:1148.1999999999998px;height:1.5px;background:#25272d;"></div>
<span class="t" style="left:2498.00px;top:858.42px;font-size:27.5px;color:#ccccdc;letter-spacing:-0.222px;-webkit-text-stroke:0.5px #ccccdc;">2023-10-25 20:31:05.736</span>
<span class="t" style="left:3190.66px;top:858.42px;font-size:27.5px;color:#ccccdc;-webkit-text-stroke:0.5px #ccccdc;">-0.49</span>
<div class="b" style="left:2359.8px;top:970.6000000000001px;width:1148.1999999999998px;height:1.5px;background:#25272d;"></div>
<span class="t" style="left:2498.00px;top:925.62px;font-size:27.5px;color:#ccccdc;letter-spacing:-0.222px;-webkit-text-stroke:0.5px #ccccdc;">2023-10-25 20:31:05.537</span>
<span class="t" style="left:3190.66px;top:925.62px;font-size:27.5px;color:#ccccdc;-webkit-text-stroke:0.5px #ccccdc;">-0.67</span>
<div class="b" style="left:2359.8px;top:1037.75px;width:1148.1999999999998px;height:1.5px;background:#25272d;"></div>
<span class="t" style="left:2498.00px;top:992.83px;font-size:27.5px;color:#ccccdc;letter-spacing:-0.222px;-webkit-text-stroke:0.5px #ccccdc;">2023-10-25 20:31:05.337</span>
<span class="t" style="left:3190.66px;top:992.83px;font-size:27.5px;color:#ccccdc;-webkit-text-stroke:0.5px #ccccdc;">-0.63</span>
<div class="b" style="left:2359.8px;top:1104.9px;width:1148.1999999999998px;height:1.5px;background:#25272d;"></div>
<span class="t" style="left:2498.00px;top:1060.03px;font-size:27.5px;color:#ccccdc;letter-spacing:-0.222px;-webkit-text-stroke:0.5px #ccccdc;">2023-10-25 20:31:05.137</span>
<span class="t" style="left:3191.68px;top:1060.03px;font-size:27.5px;color:#ccccdc;-webkit-text-stroke:0.5px #ccccdc;">-0.11</span>
<div class="b" style="left:2359.8px;top:1172.0500000000002px;width:1148.1999999999998px;height:1.5px;background:#25272d;"></div>
<span class="t" style="left:2498.00px;top:1127.22px;font-size:27.5px;color:#ccccdc;letter-spacing:-0.222px;-webkit-text-stroke:0.5px #ccccdc;">2023-10-25 20:31:04.937</span>
<span class="t" style="left:3187.59px;top:1127.22px;font-size:27.5px;color:#ccccdc;-webkit-text-stroke:0.5px #ccccdc;">0.515</span>
<span class="t" style="left:2498.00px;top:1194.42px;font-size:27.5px;color:#ccccdc;letter-spacing:-0.222px;-webkit-text-stroke:0.5px #ccccdc;">2023-10-25 20:31:04.736</span>
<span class="t" style="left:3195.23px;top:1194.42px;font-size:27.5px;color:#ccccdc;-webkit-text-stroke:0.5px #ccccdc;">1.01</span>
<div class="b" style="left:3508.5px;top:503.5px;width:14.5px;height:94.5px;background:#3b3d45;border-radius:2px;"></div>
<div class="b" style="left:141.0px;top:1251.3px;width:2202.4px;height:641.8px;background:#181b1f;border:2px solid #23262c;box-sizing:border-box;border-radius:4.5px;"></div>
<span class="t" style="left:1153.50px;top:1268.59px;font-size:26.6px;color:#ccccdc;letter-spacing:0.464px;-webkit-text-stroke:0.85px #ccccdc;">Bottom strains</span>
<span class="t" style="left:157.60px;top:1340.42px;font-size:39.5px;color:#ccccdc;letter-spacing:-1.848px;-webkit-text-stroke:0.5px #ccccdc;">Eps_1</span>
<div class="b lcd" style="left:158.4px;top:1390.0px;width:1870px;height:72.5px"><i style="left:0.00px;background:radial-gradient(rgba(31,96,196,0.95) 10%,rgba(31,96,196,0.55))"></i><i style="left:23.04px;background:radial-gradient(rgba(37,100,195,0.95) 10%,rgba(37,100,195,0.55))"></i><i style="left:46.08px;background:radial-gradient(rgba(42,103,194,0.95) 10%,rgba(42,103,194,0.55))"></i><i style="left:69.12px;background:radial-gradient(rgba(48,107,193,0.95) 10%,rgba(48,107,193,0.55))"></i><i style="left:92.16px;background:radial-gradient(rgba(53,111,192,0.95) 10%,rgba(53,111,192,0.55))"></i><i style="left:115.20px;background:radial-gradient(rgba(59,115,191,0.95) 10%,rgba(59,115,191,0.55))"></i><i style="left:138.24px;background:radial-gradient(rgba(64,118,190,0.95) 10%,rgba(64,118,190,0.55))"></i><i style="left:161.28px;background:radial-gradient(rgba(69,122,189,0.95) 10%,rgba(69,122,189,0.55))"></i><i style="left:184.32px;background:radial-gradient(rgba(75,126,187,0.95) 10%,rgba(75,126,187,0.55))"></i><i style="left:207.36px;background:radial-gradient(rgba(80,129,186,0.95) 10%,rgba(80,129,186,0.55))"></i><i style="left:230.40px;background:radial-gradient(rgba(86,133,185,0.95) 10%,rgba(86,133,185,0.55))"></i><i style="left:253.44px;background:radial-gradient(rgba(91,136,184,0.95) 10%,rgba(91,136,184,0.55))"></i><i style="left:276.48px;background:radial-gradient(rgba(96,139,183,0.95) 10%,rgba(96,139,183,0.55))"></i><i style="left:299.52px;background:radial-gradient(rgba(101,143,182,0.95) 10%,rgba(101,143,182,0.55))"></i><i style="left:322.56px;background:radial-gradient(rgba(106,146,181,0.95) 10%,rgba(106,146,181,0.55))"></i><i style="left:345.60px;background:radial-gradient(rgba(112,149,179,0.95) 10%,rgba(112,149,179,0.55))"></i><i style="left:368.64px;background:radial-gradient(rgba(117,152,178,0.95) 10%,rgba(117,152,178,0.55))"></i><i style="left:391.68px;background:radial-gradient(rgba(122,155,177,0.95) 10%,rgba(122,155,177,0.55))"></i><i style="left:414.72px;background:radial-gradient(rgba(126,158,176,0.95) 10%,rgba(126,158,176,0.55))"></i><i style="left:437.76px;background:radial-gradient(rgba(131,161,175,0.95) 10%,rgba(131,161,175,0.55))"></i><i style="left:460.80px;background:radial-gradient(rgba(136,163,173,0.95) 10%,rgba(136,163,173,0.55))"></i><i style="left:483.84px;background:radial-gradient(rgba(141,166,172,0.95) 10%,rgba(141,166,172,0.55))"></i><i style="left:506.88px;background:radial-gradient(rgba(145,168,171,0.95) 10%,rgba(145,168,171,0.55))"></i><i style="left:529.92px;background:radial-gradient(rgba(150,171,170,0.95) 10%,rgba(150,171,170,0.55))"></i><i style="left:552.96px;background:radial-gradient(rgba(154,173,168,0.95) 10%,rgba(154,173,168,0.55))"></i><i style="left:576.00px;background:radial-gradient(rgba(158,175,167,0.95) 10%,rgba(158,175,167,0.55))"></i><i style="left:599.04px;background:radial-gradient(rgba(162,177,165,0.95) 10%,rgba(162,177,165,0.55))"></i><i style="left:622.08px;background:radial-gradient(rgba(166,179,164,0.95) 10%,rgba(166,179,164,0.55))"></i><i style="left:645.12px;background:radial-gradient(rgba(170,180,163,0.95) 10%,rgba(170,180,163,0.55))"></i><i style="left:668.16px;background:radial-gradient(rgba(174,182,161,0.95) 10%,rgba(174,182,161,0.55))"></i><i style="left:691.20px;background:radial-gradient(rgba(178,183,160,0.95) 10%,rgba(178,183,160,0.55))"></i><i style="left:714.24px;background:radial-gradient(rgba(181,184,158,0.95) 10%,rgba(181,184,158,0.55))"></i><i style="left:737.28px;background:radial-gradient(rgba(185,185,156,0.95) 10%,rgba(185,185,156,0.55))"></i><i style="left:760.32px;background:radial-gradient(rgba(188,186,155,0.95) 10%,rgba(188,186,155,0.55))"></i><i style="left:783.36px;background:radial-gradient(rgba(191,186,153,0.95) 10%,rgba(191,186,153,0.55))"></i><i style="left:806.40px;background:radial-gradient(rgba(194,187,152,0.95) 10%,rgba(194,187,152,0.55))"></i><i style="left:829.44px;background:radial-gradient(rgba(197,187,150,0.95) 10%,rgba(197,187,150,0.55))"></i><i style="left:852.48px;background:radial-gradient(rgba(200,187,148,0.95) 10%,rgba(200,187,148,0.55))"></i><i style="left:875.52px;background:radial-gradient(rgba(202,187,146,0.95) 10%,rgba(202,187,146,0.55))"></i><i style="left:898.56px;background:radial-gradient(rgba(205,186,144,0.95) 10%,rgba(205,186,144,0.55))"></i><i style="left:921.60px;background:radial-gradient(rgba(207,185,143,0.95) 10%,rgba(207,185,143,0.55))"></i><i style="left:944.64px;background:radial-gradient(rgba(209,185,141,0.95) 10%,rgba(209,185,141,0.55))"></i><i style="left:967.68px;background:radial-gradient(rgba(211,183,139,0.95) 10%,rgba(211,183,139,0.55))"></i><i style="left:990.72px;background:radial-gradient(rgba(212,182,137,0.95) 10%,rgba(212,182,137,0.55))"></i><i style="left:1013.76px;background:radial-gradient(rgba(214,180,135,0.95) 10%,rgba(214,180,135,0.55))"></i><i style="left:1036.80px;background:radial-gradient(rgba(215,179,133,0.95) 10%,rgba(215,179,133,0.55))"></i><i style="left:1059.84px;background:radial-gradient(rgba(217,177,131,0.95) 10%,rgba(217,177,131,0.55))"></i><i style="left:1082.88px;background:radial-gradient(rgba(218,174,128,0.95) 10%,rgba(218,174,128,0.55))"></i><i style="left:1105.92px;background:radial-gradient(rgba(219,172,126,0.95) 10%,rgba(219,172,126,0.55))"></i><i style="left:1128.96px;background:radial-gradient(rgba(219,169,124,0.95) 10%,rgba(219,169,124,0.55))"></i><i style="left:1152.00px;background:radial-gradient(rgba(220,167,122,0.95) 10%,rgba(220,167,122,0.55))"></i><i style="left:1175.04px;background:radial-gradient(rgba(221,164,120,0.95) 10%,rgba(221,164,120,0.55))"></i><i style="left:1198.08px;background:radial-gradient(rgba(221,161,117,0.95) 10%,rgba(221,161,117,0.55))"></i><i style="left:1221.12px;background:radial-gradient(rgba(221,157,115,0.95) 10%,rgba(221,157,115,0.55))"></i><i style="left:1244.16px;background:rgba(221,154,113,0.18)"></i><i style="left:1267.20px;background:rgba(221,150,110,0.18)"></i><i style="left:1290.24px;background:rgba(221,147,108,0.18)"></i><i style="left:1313.28px;background:rgba(221,143,105,0.18)"></i><i style="left:1336.32px;background:rgba(221,139,103,0.18)"></i><i style="left:1359.36px;background:rgba(220,135,100,0.18)"></i><i style="left:1382.40px;background:rgba(220,130,98,0.18)"></i><i style="left:1405.44px;background:rgba(219,126,95,0.18)"></i><i style="left:1428.48px;background:rgba(219,122,93,0.18)"></i><i style="left:1451.52px;background:rgba(218,117,90,0.18)"></i><i style="left:1474.56px;background:rgba(217,112,88,0.18)"></i><i style="left:1497.60px;background:rgba(216,107,85,0.18)"></i><i style="left:1520.64px;background:rgba(215,103,83,0.18)"></i><i style="left:1543.68px;background:rgba(214,98,80,0.18)"></i><i style="left:1566.72px;background:rgba(213,92,77,0.18)"></i><i style="left:1589.76px;background:rgba(212,87,75,0.18)"></i><i style="left:1612.80px;background:rgba(211,82,72,0.18)"></i><i style="left:1635.84px;background:rgba(210,77,69,0.18)"></i><i style="left:1658.88px;background:rgba(209,72,67,0.18)"></i><i style="left:1681.92px;background:rgba(207,66,64,0.18)"></i><i style="left:1704.96px;background:rgba(206,61,61,0.18)"></i><i style="left:1728.00px;background:rgba(205,55,58,0.18)"></i><i style="left:1751.04px;background:rgba(203,50,56,0.18)"></i><i style="left:1774.08px;background:rgba(202,44,53,0.18)"></i><i style="left:1797.12px;background:rgba(200,39,50,0.18)"></i><i style="left:1820.16px;background:rgba(199,33,47,0.18)"></i><i style="left:1843.20px;background:rgba(197,28,45,0.18)"></i></div>
<span class="t" style="left:2068.93px;top:1394.20px;font-size:64px;color:#e89870;letter-spacing:1.085px;-webkit-text-stroke:0.7px #e89870;">1.03e-8</span>
<span class="t" style="left:157.60px;top:1477.92px;font-size:39.5px;color:#ccccdc;letter-spacing:-1.848px;-webkit-text-stroke:0.5px #ccccdc;">Eps_2</span>
<div class="b lcd" style="left:158.4px;top:1527.5px;width:1870px;height:72.5px"><i style="left:0.00px;background:radial-gradient(rgba(31,96,196,0.95) 10%,rgba(31,96,196,0.55))"></i><i style="left:23.04px;background:radial-gradient(rgba(37,100,195,0.95) 10%,rgba(37,100,195,0.55))"></i><i style="left:46.08px;background:radial-gradient(rgba(42,103,194,0.95) 10%,rgba(42,103,194,0.55))"></i><i style="left:69.12px;background:radial-gradient(rgba(48,107,193,0.95) 10%,rgba(48,107,193,0.55))"></i><i style="left:92.16px;background:radial-gradient(rgba(53,111,192,0.95) 10%,rgba(53,111,192,0.55))"></i><i style="left:115.20px;background:radial-gradient(rgba(59,115,191,0.95) 10%,rgba(59,115,191,0.55))"></i><i style="left:138.24px;background:radial-gradient(rgba(64,118,190,0.95) 10%,rgba(64,118,190,0.55))"></i><i style="left:161.28px;background:radial-gradient(rgba(69,122,189,0.95) 10%,rgba(69,122,189,0.55))"></i><i style="left:184.32px;background:radial-gradient(rgba(75,126,187,0.95) 10%,rgba(75,126,187,0.55))"></i><i style="left:207.36px;background:radial-gradient(rgba(80,129,186,0.95) 10%,rgba(80,129,186,0.55))"></i><i style="left:230.40px;background:radial-gradient(rgba(86,133,185,0.95) 10%,rgba(86,133,185,0.55))"></i><i style="left:253.44px;background:radial-gradient(rgba(91,136,184,0.95) 10%,rgba(91,136,184,0.55))"></i><i style="left:276.48px;background:radial-gradient(rgba(96,139,183,0.95) 10%,rgba(96,139,183,0.55))"></i><i style="left:299.52px;background:radial-gradient(rgba(101,143,182,0.95) 10%,rgba(101,143,182,0.55))"></i><i style="left:322.56px;background:radial-gradient(rgba(106,146,181,0.95) 10%,rgba(106,146,181,0.55))"></i><i style="left:345.60px;background:radial-gradient(rgba(112,149,179,0.95) 10%,rgba(112,149,179,0.55))"></i><i style="left:368.64px;background:radial-gradient(rgba(117,152,178,0.95) 10%,rgba(117,152,178,0.55))"></i><i style="left:391.68px;background:radial-gradient(rgba(122,155,177,0.95) 10%,rgba(122,155,177,0.55))"></i><i style="left:414.72px;background:radial-gradient(rgba(126,158,176,0.95) 10%,rgba(126,158,176,0.55))"></i><i style="left:437.76px;background:radial-gradient(rgba(131,161,175,0.95) 10%,rgba(131,161,175,0.55))"></i><i style="left:460.80px;background:radial-gradient(rgba(136,163,173,0.95) 10%,rgba(136,163,173,0.55))"></i><i style="left:483.84px;background:radial-gradient(rgba(141,166,172,0.95) 10%,rgba(141,166,172,0.55))"></i><i style="left:506.88px;background:radial-gradient(rgba(145,168,171,0.95) 10%,rgba(145,168,171,0.55))"></i><i style="left:529.92px;background:radial-gradient(rgba(150,171,170,0.95) 10%,rgba(150,171,170,0.55))"></i><i style="left:552.96px;background:radial-gradient(rgba(154,173,168,0.95) 10%,rgba(154,173,168,0.55))"></i><i style="left:576.00px;background:radial-gradient(rgba(158,175,167,0.95) 10%,rgba(158,175,167,0.55))"></i><i style="left:599.04px;background:radial-gradient(rgba(162,177,165,0.95) 10%,rgba(162,177,165,0.55))"></i><i style="left:622.08px;background:radial-gradient(rgba(166,179,164,0.95) 10%,rgba(166,179,164,0.55))"></i><i style="left:645.12px;background:radial-gradient(rgba(170,180,163,0.95) 10%,rgba(170,180,163,0.55))"></i><i style="left:668.16px;background:radial-gradient(rgba(174,182,161,0.95) 10%,rgba(174,182,161,0.55))"></i><i style="left:691.20px;background:radial-gradient(rgba(178,183,160,0.95) 10%,rgba(178,183,160,0.55))"></i><i style="left:714.24px;background:radial-gradient(rgba(181,184,158,0.95) 10%,rgba(181,184,158,0.55))"></i><i style="left:737.28px;background:rgba(185,185,156,0.18)"></i><i style="left:760.32px;background:rgba(188,186,155,0.18)"></i><i style="left:783.36px;background:rgba(191,186,153,0.18)"></i><i style="left:806.40px;background:rgba(194,187,152,0.18)"></i><i style="left:829.44px;background:rgba(197,187,150,0.18)"></i><i style="left:852.48px;background:rgba(200,187,148,0.18)"></i><i style="left:875.52px;background:rgba(202,187,146,0.18)"></i><i style="left:898.56px;background:rgba(205,186,144,0.18)"></i><i style="left:921.60px;background:rgba(207,185,143,0.18)"></i><i style="left:944.64px;background:rgba(209,185,141,0.18)"></i><i style="left:967.68px;background:rgba(211,183,139,0.18)"></i><i style="left:990.72px;background:rgba(212,182,137,0.18)"></i><i style="left:1013.76px;background:rgba(214,180,135,0.18)"></i><i style="left:1036.80px;background:rgba(215,179,133,0.18)"></i><i style="left:1059.84px;background:rgba(217,177,131,0.18)"></i><i style="left:1082.88px;background:rgba(218,174,128,0.18)"></i><i style="left:1105.92px;background:rgba(219,172,126,0.18)"></i><i style="left:1128.96px;background:rgba(219,169,124,0.18)"></i><i style="left:1152.00px;background:rgba(220,167,122,0.18)"></i><i style="left:1175.04px;background:rgba(221,164,120,0.18)"></i><i style="left:1198.08px;background:rgba(221,161,117,0.18)"></i><i style="left:1221.12px;background:rgba(221,157,115,0.18)"></i><i style="left:1244.16px;background:rgba(221,154,113,0.18)"></i><i style="left:1267.20px;background:rgba(221,150,110,0.18)"></i><i style="left:1290.24px;background:rgba(221,147,108,0.18)"></i><i style="left:1313.28px;background:rgba(221,143,105,0.18)"></i><i style="left:1336.32px;background:rgba(221,139,103,0.18)"></i><i style="left:1359.36px;background:rgba(220,135,100,0.18)"></i><i style="left:1382.40px;background:rgba(220,130,98,0.18)"></i><i style="left:1405.44px;background:rgba(219,126,95,0.18)"></i><i style="left:1428.48px;background:rgba(219,122,93,0.18)"></i><i style="left:1451.52px;background:rgba(218,117,90,0.18)"></i><i style="left:1474.56px;background:rgba(217,112,88,0.18)"></i><i style="left:1497.60px;background:rgba(216,107,85,0.18)"></i><i style="left:1520.64px;background:rgba(215,103,83,0.18)"></i><i style="left:1543.68px;background:rgba(214,98,80,0.18)"></i><i style="left:1566.72px;background:rgba(213,92,77,0.18)"></i><i style="left:1589.76px;background:rgba(212,87,75,0.18)"></i><i style="left:1612.80px;background:rgba(211,82,72,0.18)"></i><i style="left:1635.84px;background:rgba(210,77,69,0.18)"></i><i style="left:1658.88px;background:rgba(209,72,67,0.18)"></i><i style="left:1681.92px;background:rgba(207,66,64,0.18)"></i><i style="left:1704.96px;background:rgba(206,61,61,0.18)"></i><i style="left:1728.00px;background:rgba(205,55,58,0.18)"></i><i style="left:1751.04px;background:rgba(203,50,56,0.18)"></i><i style="left:1774.08px;background:rgba(202,44,53,0.18)"></i><i style="left:1797.12px;background:rgba(200,39,50,0.18)"></i><i style="left:1820.16px;background:rgba(199,33,47,0.18)"></i><i style="left:1843.20px;background:rgba(197,28,45,0.18)"></i></div>
<span class="t" style="left:2046.97px;top:1531.60px;font-size:64px;color:#cbcaa6;letter-spacing:1.022px;-webkit-text-stroke:0.7px #cbcaa6;">-7.3e-10</span>
<span class="t" style="left:157.60px;top:1615.42px;font-size:39.5px;color:#ccccdc;letter-spacing:-1.848px;-webkit-text-stroke:0.5px #ccccdc;">Eps_3</span>
<div class="b lcd" style="left:158.4px;top:1665.0px;width:1870px;height:72.5px"><i style="left:0.00px;background:radial-gradient(rgba(31,96,196,0.95) 10%,rgba(31,96,196,0.55))"></i><i style="left:23.04px;background:radial-gradient(rgba(37,100,195,0.95) 10%,rgba(37,100,195,0.55))"></i><i style="left:46.08px;background:radial-gradient(rgba(42,103,194,0.95) 10%,rgba(42,103,194,0.55))"></i><i style="left:69.12px;background:radial-gradient(rgba(48,107,193,0.95) 10%,rgba(48,107,193,0.55))"></i><i style="left:92.16px;background:radial-gradient(rgba(53,111,192,0.95) 10%,rgba(53,111,192,0.55))"></i><i style="left:115.20px;background:radial-gradient(rgba(59,115,191,0.95) 10%,rgba(59,115,191,0.55))"></i><i style="left:138.24px;background:radial-gradient(rgba(64,118,190,0.95) 10%,rgba(64,118,190,0.55))"></i><i style="left:161.28px;background:radial-gradient(rgba(69,122,189,0.95) 10%,rgba(69,122,189,0.55))"></i><i style="left:184.32px;background:radial-gradient(rgba(75,126,187,0.95) 10%,rgba(75,126,187,0.55))"></i><i style="left:207.36px;background:radial-gradient(rgba(80,129,186,0.95) 10%,rgba(80,129,186,0.55))"></i><i style="left:230.40px;background:radial-gradient(rgba(86,133,185,0.95) 10%,rgba(86,133,185,0.55))"></i><i style="left:253.44px;background:radial-gradient(rgba(91,136,184,0.95) 10%,rgba(91,136,184,0.55))"></i><i style="left:276.48px;background:radial-gradient(rgba(96,139,183,0.95) 10%,rgba(96,139,183,0.55))"></i><i style="left:299.52px;background:radial-gradient(rgba(101,143,182,0.95) 10%,rgba(101,143,182,0.55))"></i><i style="left:322.56px;background:radial-gradient(rgba(106,146,181,0.95) 10%,rgba(106,146,181,0.55))"></i><i style="left:345.60px;background:radial-gradient(rgba(112,149,179,0.95) 10%,rgba(112,149,179,0.55))"></i><i style="left:368.64px;background:radial-gradient(rgba(117,152,178,0.95) 10%,rgba(117,152,178,0.55))"></i><i style="left:391.68px;background:radial-gradient(rgba(122,155,177,0.95) 10%,rgba(122,155,177,0.55))"></i><i style="left:414.72px;background:radial-gradient(rgba(126,158,176,0.95) 10%,rgba(126,158,176,0.55))"></i><i style="left:437.76px;background:radial-gradient(rgba(131,161,175,0.95) 10%,rgba(131,161,175,0.55))"></i><i style="left:460.80px;background:radial-gradient(rgba(136,163,173,0.95) 10%,rgba(136,163,173,0.55))"></i><i style="left:483.84px;background:radial-gradient(rgba(141,166,172,0.95) 10%,rgba(141,166,172,0.55))"></i><i style="left:506.88px;background:radial-gradient(rgba(145,168,171,0.95) 10%,rgba(145,168,171,0.55))"></i><i style="left:529.92px;background:radial-gradient(rgba(150,171,170,0.95) 10%,rgba(150,171,170,0.55))"></i><i style="left:552.96px;background:radial-gradient(rgba(154,173,168,0.95) 10%,rgba(154,173,168,0.55))"></i><i style="left:576.00px;background:radial-gradient(rgba(158,175,167,0.95) 10%,rgba(158,175,167,0.55))"></i><i style="left:599.04px;background:radial-gradient(rgba(162,177,165,0.95) 10%,rgba(162,177,165,0.55))"></i><i style="left:622.08px;background:radial-gradient(rgba(166,179,164,0.95) 10%,rgba(166,179,164,0.55))"></i><i style="left:645.12px;background:radial-gradient(rgba(170,180,163,0.95) 10%,rgba(170,180,163,0.55))"></i><i style="left:668.16px;background:radial-gradient(rgba(174,182,161,0.95) 10%,rgba(174,182,161,0.55))"></i><i style="left:691.20px;background:radial-gradient(rgba(178,183,160,0.95) 10%,rgba(178,183,160,0.55))"></i><i style="left:714.24px;background:radial-gradient(rgba(181,184,158,0.95) 10%,rgba(181,184,158,0.55))"></i><i style="left:737.28px;background:radial-gradient(rgba(185,185,156,0.95) 10%,rgba(185,185,156,0.55))"></i><i style="left:760.32px;background:rgba(188,186,155,0.18)"></i><i style="left:783.36px;background:rgba(191,186,153,0.18)"></i><i style="left:806.40px;background:rgba(194,187,152,0.18)"></i><i style="left:829.44px;background:rgba(197,187,150,0.18)"></i><i style="left:852.48px;background:rgba(200,187,148,0.18)"></i><i style="left:875.52px;background:rgba(202,187,146,0.18)"></i><i style="left:898.56px;background:rgba(205,186,144,0.18)"></i><i style="left:921.60px;background:rgba(207,185,143,0.18)"></i><i style="left:944.64px;background:rgba(209,185,141,0.18)"></i><i style="left:967.68px;background:rgba(211,183,139,0.18)"></i><i style="left:990.72px;background:rgba(212,182,137,0.18)"></i><i style="left:1013.76px;background:rgba(214,180,135,0.18)"></i><i style="left:1036.80px;background:rgba(215,179,133,0.18)"></i><i style="left:1059.84px;background:rgba(217,177,131,0.18)"></i><i style="left:1082.88px;background:rgba(218,174,128,0.18)"></i><i style="left:1105.92px;background:rgba(219,172,126,0.18)"></i><i style="left:1128.96px;background:rgba(219,169,124,0.18)"></i><i style="left:1152.00px;background:rgba(220,167,122,0.18)"></i><i style="left:1175.04px;background:rgba(221,164,120,0.18)"></i><i style="left:1198.08px;background:rgba(221,161,117,0.18)"></i><i style="left:1221.12px;background:rgba(221,157,115,0.18)"></i><i style="left:1244.16px;background:rgba(221,154,113,0.18)"></i><i style="left:1267.20px;background:rgba(221,150,110,0.18)"></i><i style="left:1290.24px;background:rgba(221,147,108,0.18)"></i><i style="left:1313.28px;background:rgba(221,143,105,0.18)"></i><i style="left:1336.32px;background:rgba(221,139,103,0.18)"></i><i style="left:1359.36px;background:rgba(220,135,100,0.18)"></i><i style="left:1382.40px;background:rgba(220,130,98,0.18)"></i><i style="left:1405.44px;background:rgba(219,126,95,0.18)"></i><i style="left:1428.48px;background:rgba(219,122,93,0.18)"></i><i style="left:1451.52px;background:rgba(218,117,90,0.18)"></i><i style="left:1474.56px;background:rgba(217,112,88,0.18)"></i><i style="left:1497.60px;background:rgba(216,107,85,0.18)"></i><i style="left:1520.64px;background:rgba(215,103,83,0.18)"></i><i style="left:1543.68px;background:rgba(214,98,80,0.18)"></i><i style="left:1566.72px;background:rgba(213,92,77,0.18)"></i><i style="left:1589.76px;background:rgba(212,87,75,0.18)"></i><i style="left:1612.80px;background:rgba(211,82,72,0.18)"></i><i style="left:1635.84px;background:rgba(210,77,69,0.18)"></i><i style="left:1658.88px;background:rgba(209,72,67,0.18)"></i><i style="left:1681.92px;background:rgba(207,66,64,0.18)"></i><i style="left:1704.96px;background:rgba(206,61,61,0.18)"></i><i style="left:1728.00px;background:rgba(205,55,58,0.18)"></i><i style="left:1751.04px;background:rgba(203,50,56,0.18)"></i><i style="left:1774.08px;background:rgba(202,44,53,0.18)"></i><i style="left:1797.12px;background:rgba(200,39,50,0.18)"></i><i style="left:1820.16px;background:rgba(199,33,47,0.18)"></i><i style="left:1843.20px;background:rgba(197,28,45,0.18)"></i></div>
<span class="t" style="left:2046.97px;top:1669.00px;font-size:64px;color:#cdcba6;letter-spacing:1.022px;-webkit-text-stroke:0.7px #cdcba6;">-5.2e-10</span>
<span class="t" style="left:157.60px;top:1752.92px;font-size:39.5px;color:#ccccdc;letter-spacing:-1.848px;-webkit-text-stroke:0.5px #ccccdc;">Eps_4</span>
<div class="b lcd" style="left:158.4px;top:1802.5px;width:1870px;height:72.5px"><i style="left:0.00px;background:radial-gradient(rgba(31,96,196,0.95) 10%,rgba(31,96,196,0.55))"></i><i style="left:23.04px;background:radial-gradient(rgba(37,100,195,0.95) 10%,rgba(37,100,195,0.55))"></i><i style="left:46.08px;background:radial-gradient(rgba(42,103,194,0.95) 10%,rgba(42,103,194,0.55))"></i><i style="left:69.12px;background:radial-gradient(rgba(48,107,193,0.95) 10%,rgba(48,107,193,0.55))"></i><i style="left:92.16px;background:radial-gradient(rgba(53,111,192,0.95) 10%,rgba(53,111,192,0.55))"></i><i style="left:115.20px;background:radial-gradient(rgba(59,115,191,0.95) 10%,rgba(59,115,191,0.55))"></i><i style="left:138.24px;background:radial-gradient(rgba(64,118,190,0.95) 10%,rgba(64,118,190,0.55))"></i><i style="left:161.28px;background:radial-gradient(rgba(69,122,189,0.95) 10%,rgba(69,122,189,0.55))"></i><i style="left:184.32px;background:radial-gradient(rgba(75,126,187,0.95) 10%,rgba(75,126,187,0.55))"></i><i style="left:207.36px;background:radial-gradient(rgba(80,129,186,0.95) 10%,rgba(80,129,186,0.55))"></i><i style="left:230.40px;background:radial-gradient(rgba(86,133,185,0.95) 10%,rgba(86,133,185,0.55))"></i><i style="left:253.44px;background:radial-gradient(rgba(91,136,184,0.95) 10%,rgba(91,136,184,0.55))"></i><i style="left:276.48px;background:radial-gradient(rgba(96,139,183,0.95) 10%,rgba(96,139,183,0.55))"></i><i style="left:299.52px;background:radial-gradient(rgba(101,143,182,0.95) 10%,rgba(101,143,182,0.55))"></i><i style="left:322.56px;background:radial-gradient(rgba(106,146,181,0.95) 10%,rgba(106,146,181,0.55))"></i><i style="left:345.60px;background:radial-gradient(rgba(112,149,179,0.95) 10%,rgba(112,149,179,0.55))"></i><i style="left:368.64px;background:radial-gradient(rgba(117,152,178,0.95) 10%,rgba(117,152,178,0.55))"></i><i style="left:391.68px;background:radial-gradient(rgba(122,155,177,0.95) 10%,rgba(122,155,177,0.55))"></i><i style="left:414.72px;background:radial-gradient(rgba(126,158,176,0.95) 10%,rgba(126,158,176,0.55))"></i><i style="left:437.76px;background:radial-gradient(rgba(131,161,175,0.95) 10%,rgba(131,161,175,0.55))"></i><i style="left:460.80px;background:rgba(136,163,173,0.18)"></i><i style="left:483.84px;background:rgba(141,166,172,0.18)"></i><i style="left:506.88px;background:rgba(145,168,171,0.18)"></i><i style="left:529.92px;background:rgba(150,171,170,0.18)"></i><i style="left:552.96px;background:rgba(154,173,168,0.18)"></i><i style="left:576.00px;background:rgba(158,175,167,0.18)"></i><i style="left:599.04px;background:rgba(162,177,165,0.18)"></i><i style="left:622.08px;background:rgba(166,179,164,0.18)"></i><i style="left:645.12px;background:rgba(170,180,163,0.18)"></i><i style="left:668.16px;background:rgba(174,182,161,0.18)"></i><i style="left:691.20px;background:rgba(178,183,160,0.18)"></i><i style="left:714.24px;background:rgba(181,184,158,0.18)"></i><i style="left:737.28px;background:rgba(185,185,156,0.18)"></i><i style="left:760.32px;background:rgba(188,186,155,0.18)"></i><i style="left:783.36px;background:rgba(191,186,153,0.18)"></i><i style="left:806.40px;background:rgba(194,187,152,0.18)"></i><i style="left:829.44px;background:rgba(197,187,150,0.18)"></i><i style="left:852.48px;background:rgba(200,187,148,0.18)"></i><i style="left:875.52px;background:rgba(202,187,146,0.18)"></i><i style="left:898.56px;background:rgba(205,186,144,0.18)"></i><i style="left:921.60px;background:rgba(207,185,143,0.18)"></i><i style="left:944.64px;background:rgba(209,185,141,0.18)"></i><i style="left:967.68px;background:rgba(211,183,139,0.18)"></i><i style="left:990.72px;background:rgba(212,182,137,0.18)"></i><i style="left:1013.76px;background:rgba(214,180,135,0.18)"></i><i style="left:1036.80px;background:rgba(215,179,133,0.18)"></i><i style="left:1059.84px;background:rgba(217,177,131,0.18)"></i><i style="left:1082.88px;background:rgba(218,174,128,0.18)"></i><i style="left:1105.92px;background:rgba(219,172,126,0.18)"></i><i style="left:1128.96px;background:rgba(219,169,124,0.18)"></i><i style="left:1152.00px;background:rgba(220,167,122,0.18)"></i><i style="left:1175.04px;background:rgba(221,164,120,0.18)"></i><i style="left:1198.08px;background:rgba(221,161,117,0.18)"></i><i style="left:1221.12px;background:rgba(221,157,115,0.18)"></i><i style="left:1244.16px;background:rgba(221,154,113,0.18)"></i><i style="left:1267.20px;background:rgba(221,150,110,0.18)"></i><i style="left:1290.24px;background:rgba(221,147,108,0.18)"></i><i style="left:1313.28px;background:rgba(221,143,105,0.18)"></i><i style="left:1336.32px;background:rgba(221,139,103,0.18)"></i><i style="left:1359.36px;background:rgba(220,135,100,0.18)"></i><i style="left:1382.40px;background:rgba(220,130,98,0.18)"></i><i style="left:1405.44px;background:rgba(219,126,95,0.18)"></i><i style="left:1428.48px;background:rgba(219,122,93,0.18)"></i><i style="left:1451.52px;background:rgba(218,117,90,0.18)"></i><i style="left:1474.56px;background:rgba(217,112,88,0.18)"></i><i style="left:1497.60px;background:rgba(216,107,85,0.18)"></i><i style="left:1520.64px;background:rgba(215,103,83,0.18)"></i><i style="left:1543.68px;background:rgba(214,98,80,0.18)"></i><i style="left:1566.72px;background:rgba(213,92,77,0.18)"></i><i style="left:1589.76px;background:rgba(212,87,75,0.18)"></i><i style="left:1612.80px;background:rgba(211,82,72,0.18)"></i><i style="left:1635.84px;background:rgba(210,77,69,0.18)"></i><i style="left:1658.88px;background:rgba(209,72,67,0.18)"></i><i style="left:1681.92px;background:rgba(207,66,64,0.18)"></i><i style="left:1704.96px;background:rgba(206,61,61,0.18)"></i><i style="left:1728.00px;background:rgba(205,55,58,0.18)"></i><i style="left:1751.04px;background:rgba(203,50,56,0.18)"></i><i style="left:1774.08px;background:rgba(202,44,53,0.18)"></i><i style="left:1797.12px;background:rgba(200,39,50,0.18)"></i><i style="left:1820.16px;background:rgba(199,33,47,0.18)"></i><i style="left:1843.20px;background:rgba(197,28,45,0.18)"></i></div>
<span class="t" style="left:2083.64px;top:1806.40px;font-size:64px;color:#96b6c8;letter-spacing:1.014px;-webkit-text-stroke:0.7px #96b6c8;">-7.1e-9</span>
<div class="b" style="left:2357.8px;top:1251.3px;width:1315.3999999999996px;height:641.8px;background:#181b1f;border:2px solid #23262c;box-sizing:border-box;border-radius:4.5px;"></div>
<span class="t" style="left:2937.90px;top:1268.69px;font-size:26.6px;color:#ccccdc;letter-spacing:0.475px;-webkit-text-stroke:0.85px #ccccdc;">Safety factor</span>
<svg style="left:0;top:0" width="3723" height="2043"><path d="M2633.16 1865.33 A402.33 402.33 0 0 1 2651.76 1569.69 L2663.37 1575.16 A389.50 389.50 0 0 0 2645.37 1861.36Z" fill="#c4162a"/><path d="M2651.76 1569.69 A402.33 402.33 0 0 1 3398.44 1865.33 L3386.23 1861.36 A389.50 389.50 0 0 0 2663.37 1575.16Z" fill="#37872d"/><path d="M2648.03 1860.50 A386.70 386.70 0 1 1 3383.57 1860.50 L3309.66 1836.48 A308.98 308.98 0 1 0 2721.94 1836.48Z" fill="#37872d"/></svg>
<span class="t" style="left:2848.80px;top:1709.67px;font-size:130.5px;color:#37872d;letter-spacing:1.105px;-webkit-text-stroke:2.6px #37872d;">10.00</span>
</body></html>
